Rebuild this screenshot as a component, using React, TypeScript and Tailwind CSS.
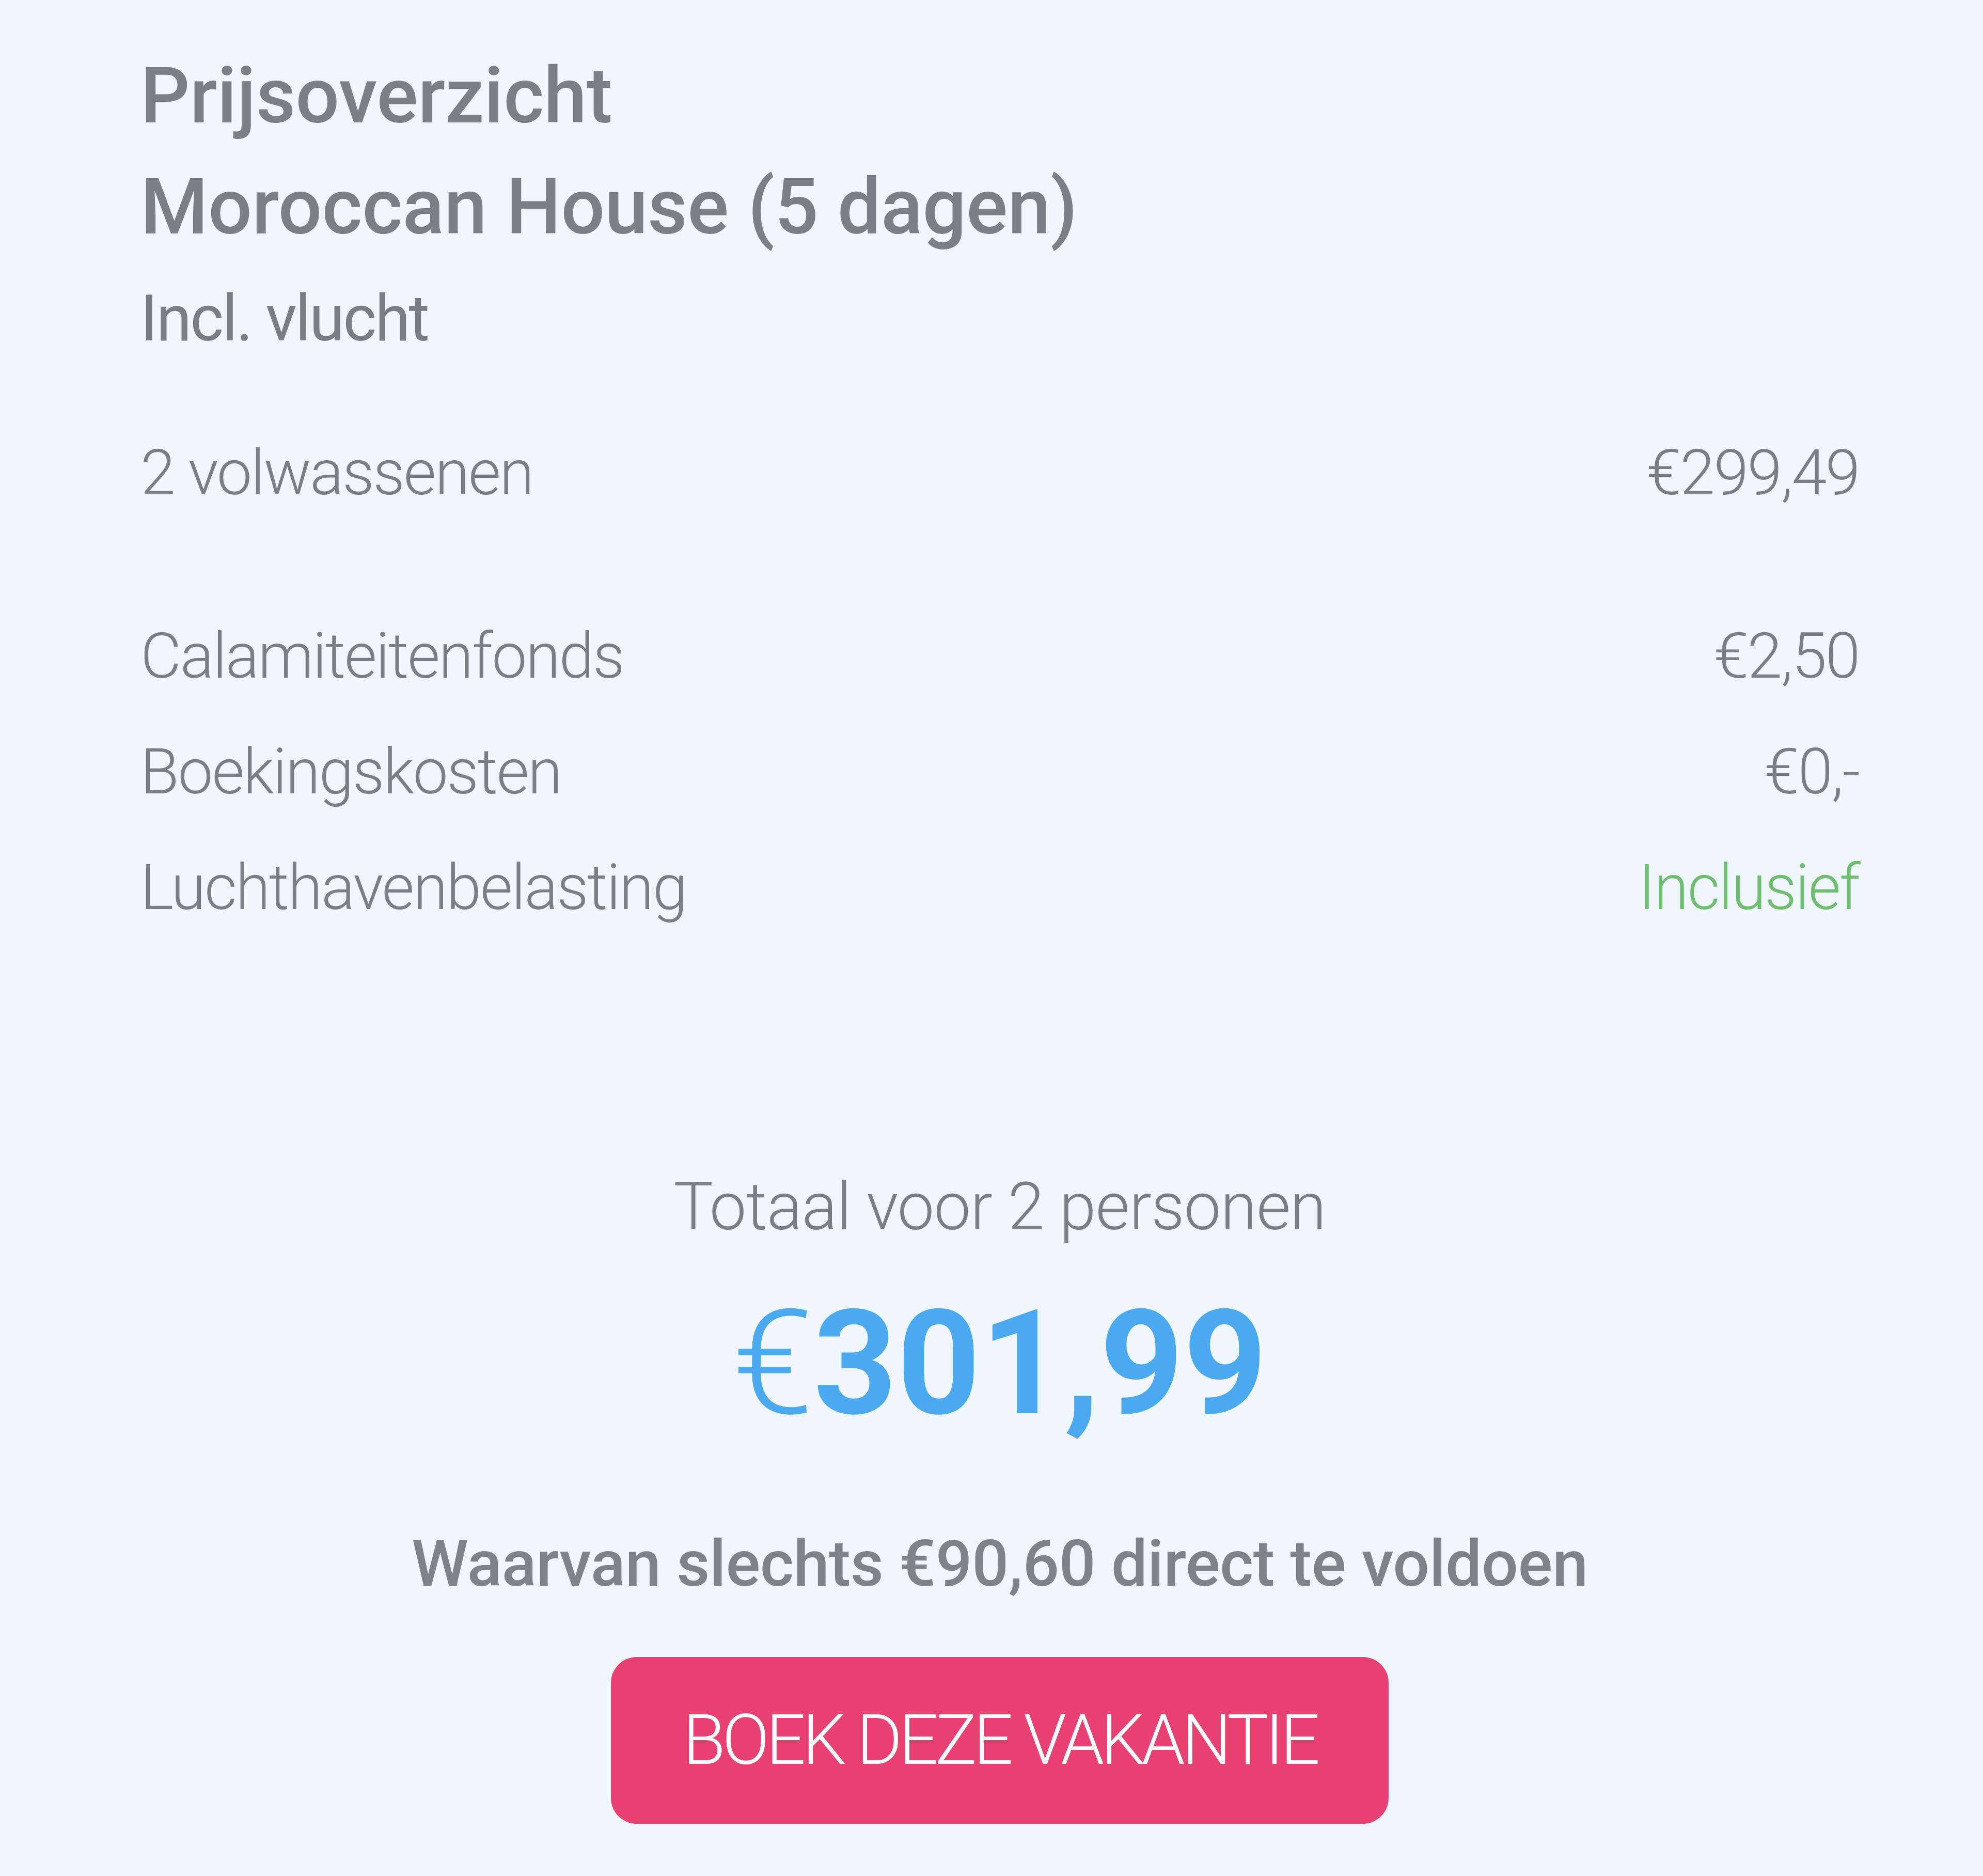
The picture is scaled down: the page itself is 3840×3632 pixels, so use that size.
export default function App() {
  const rows = [
    { label: "Calamiteitenfonds", value: "€2,50", green: false },
    { label: "Boekingskosten", value: "€0,-", green: false },
    { label: "Luchthavenbelasting", value: "Inclusief", green: true },
  ];

  return (
    <div
      className="min-h-screen bg-[#f0f6fd] text-[#7a7e85] pl-[272px] pr-[240px] pt-[79px] pb-[101px]"
      style={{ fontFamily: "Roboto, 'Liberation Sans', sans-serif" }}
    >
      <div className="text-[150px] leading-[215px] font-medium text-[#7b7f86] tracking-[-0.3px]">
        <div>Prijsoverzicht</div>
        <div>Moroccan House (5 dagen)</div>
      </div>
      <div className="text-[124px] leading-[215px] font-normal text-[#797d84] tracking-[-3px]">
        Incl. vlucht
      </div>

      <div className="mt-[80px] flex justify-between text-[122px] leading-[224px] font-light tracking-[-2.5px]">
        <span>2 volwassenen</span>
        <span>€299,49</span>
      </div>

      <div className="mt-[131px] flex flex-col">
        {rows.map((row) => (
          <div
            key={row.label}
            className="flex justify-between text-[122px] leading-[224px] font-light tracking-[-2.5px]"
          >
            <span>{row.label}</span>
            <span className={row.green ? "text-[#6fbd70]" : ""}>{row.value}</span>
          </div>
        ))}
      </div>

      <div className="mt-[425px] flex flex-col items-center">
        <div className="text-[128px] leading-[160px] font-light tracking-[-1px]">
          Totaal voor 2 personen
        </div>
        <div className="mt-[64px] text-[282px] leading-[320px] font-bold text-[#4aa9ef]">
          <span className="font-light">€</span>301,99
        </div>
        <div className="mt-[148px] text-[125px] leading-[160px] font-medium text-[#7e8289] tracking-[-0.5px]">
          Waarvan slechts €90,60 direct te voldoen
        </div>
        <button className="mt-[100px] w-[1506px] h-[323px] rounded-[50px] bg-[#e6416f] text-white text-[135px] font-light tracking-[-6.5px]">
          BOEK DEZE VAKANTIE
        </button>
      </div>
    </div>
  );
}
